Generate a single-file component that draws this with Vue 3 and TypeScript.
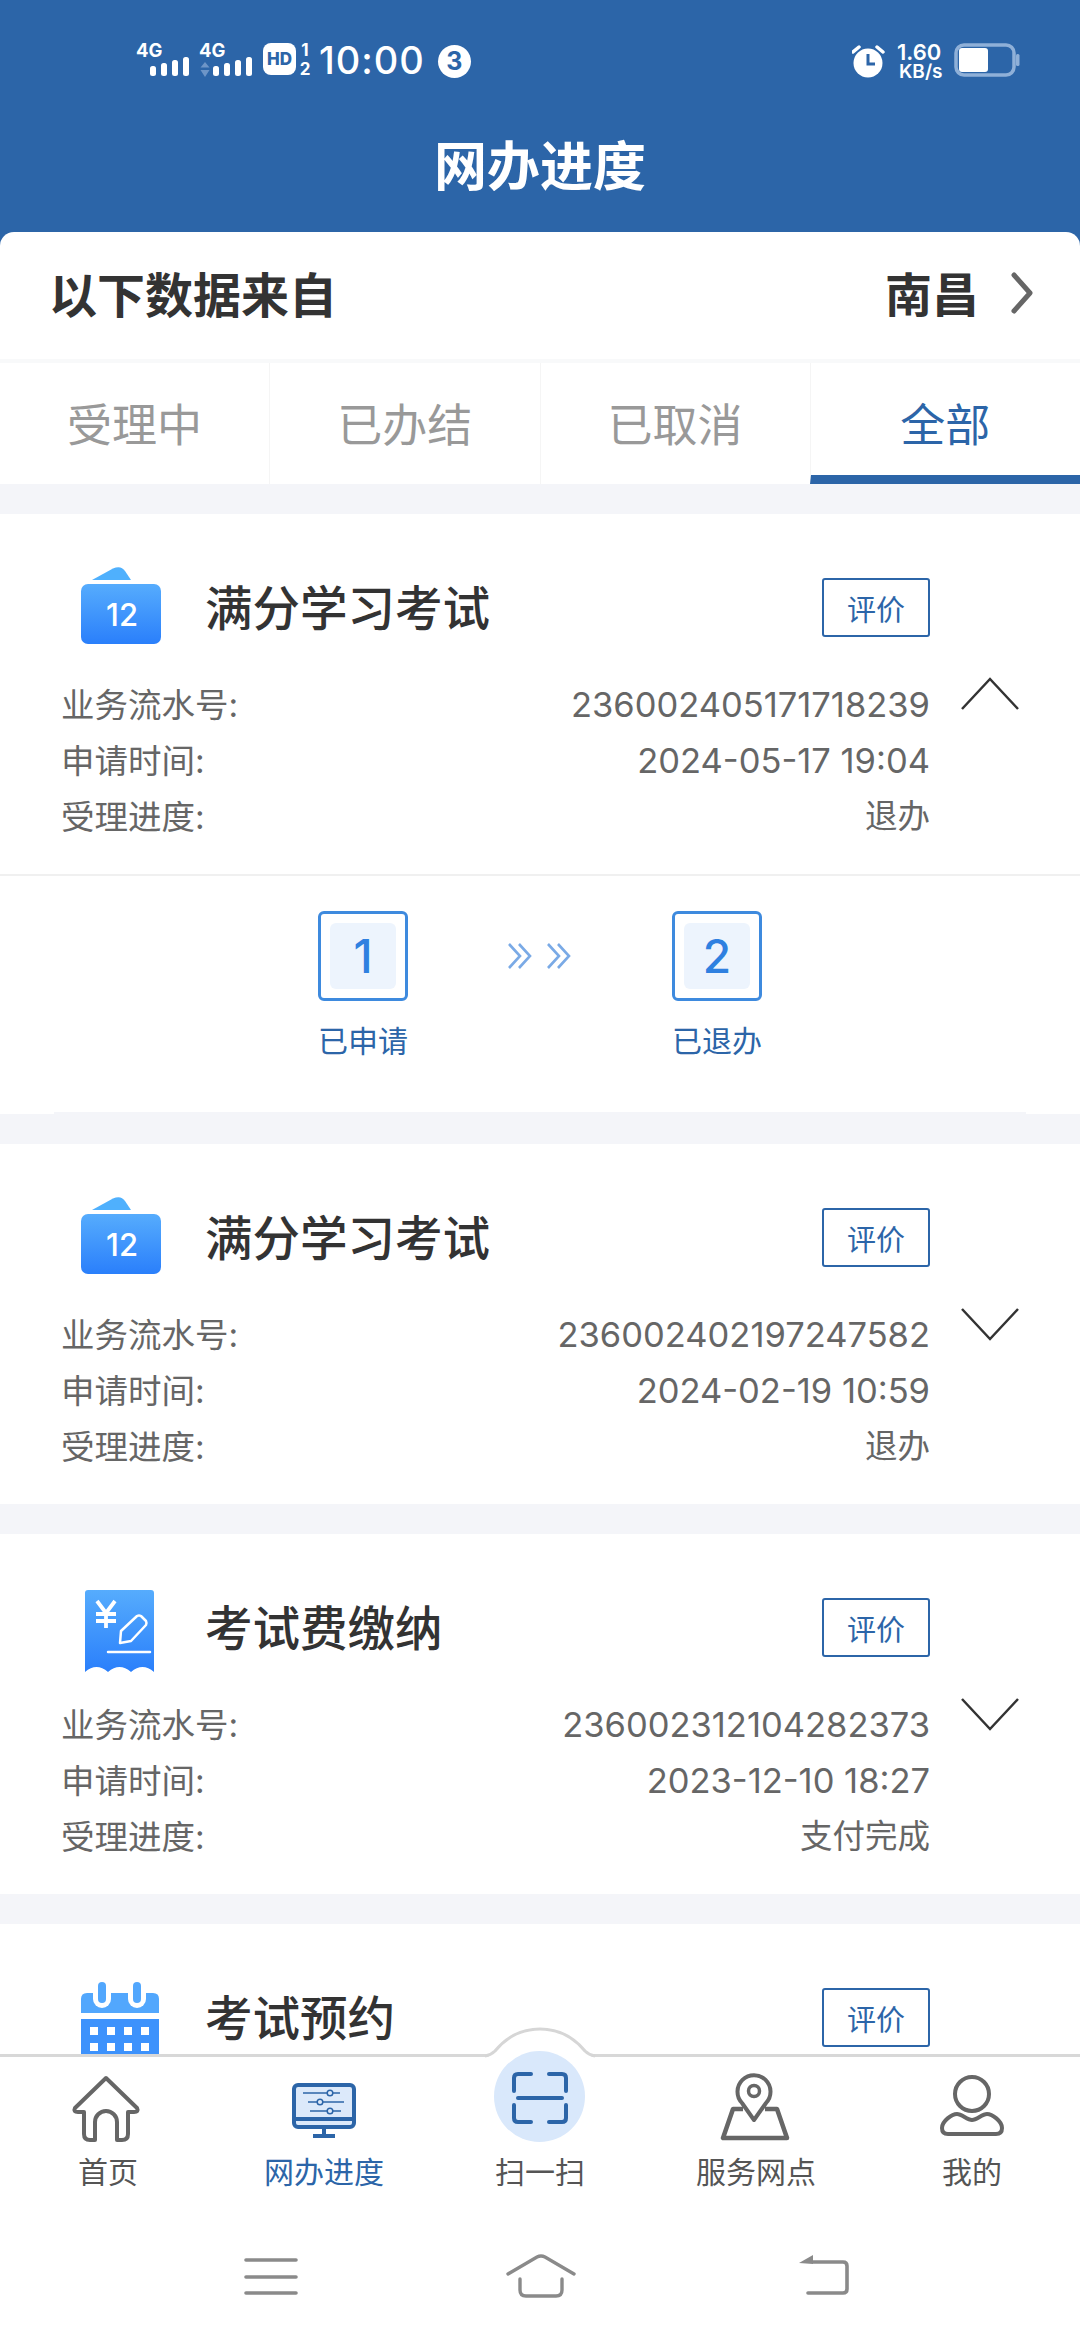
<template>
  <div class="page">
    <div class="top">
      <div class="status">
        <div class="status-left">
          <svg class="signal" width="54" height="40" viewBox="0 -5 54 40">
            <text x="0" y="14" class="sig-text">4G</text>
            <rect x="14" y="23" width="6" height="10" rx="2.5" fill="#fff" />
            <rect x="25" y="20" width="6" height="13" rx="2.5" fill="#fff" />
            <rect x="36" y="17" width="6" height="16" rx="2.5" fill="#fff" />
            <rect x="47" y="14" width="6" height="19" rx="2.5" fill="#fff" />
          </svg>
          <svg class="signal" width="54" height="41" viewBox="0 -5 54 41">
            <text x="0" y="14" class="sig-text">4G</text>
            <path d="M6 19 L10.5 24.5 H1.5 Z M1.5 27 H10.5 L6 34 Z" fill="#6d95c7" />
            <rect x="14" y="23" width="6" height="10" rx="2.5" fill="#fff" />
            <rect x="25" y="20" width="6" height="13" rx="2.5" fill="#fff" />
            <rect x="36" y="17" width="6" height="16" rx="2.5" fill="#fff" />
            <rect x="47" y="14" width="6" height="19" rx="2.5" fill="#fff" />
          </svg>
          <span class="hd">HD</span>
          <span class="sim"><span>1</span><span>2</span></span>
          <span class="time">10:00</span>
          <span class="badge">3</span>
        </div>
        <div class="status-right">
          <svg width="34" height="36" viewBox="0 0 34 36">
            <circle cx="16" cy="20" r="14.5" fill="#fff" />
            <path d="M16 11 V21 H23" fill="none" stroke="#2c65a8" stroke-width="3" />
            <path d="M1 9 L7 4 M25 4 L31 9" stroke="#fff" stroke-width="3.5" stroke-linecap="round" />
          </svg>
          <div class="speed"><span>1.60</span><span class="unit">KB/s</span></div>
          <svg width="66" height="34" viewBox="0 0 66 34">
            <rect x="2" y="2" width="58" height="30" rx="8" fill="none" stroke="#8fb0d8" stroke-width="3.5" />
            <rect x="5" y="5" width="29" height="24" rx="3" fill="#fff" />
            <rect x="62" y="11" width="3.5" height="12" rx="1.5" fill="#8fb0d8" />
          </svg>
        </div>
      </div>
      <div class="title">网办进度</div>
      <div class="source">
        <span class="source-label">以下数据来自</span>
        <span class="source-city">南昌</span>
        <svg class="source-arrow" width="24" height="42" viewBox="0 0 24 42">
          <path d="M4 3 L20 21 L4 39" fill="none" stroke="#666" stroke-width="5" stroke-linecap="round" stroke-linejoin="round" />
        </svg>
      </div>
    </div>

    <div class="tabs">
      <div v-for="tab in tabs" :key="tab" class="tab" :class="{ active: tab === activeTab }">{{ tab }}</div>
    </div>

    <div class="list">
      <section v-for="item in items" :key="item.no || item.title" class="card">
        <div class="head">
          <svg class="icon" width="80" height="86" viewBox="0 0 80 86">
            <defs>
              <linearGradient :id="'g-' + item.title + item.no" x1="0" y1="0" x2="0" y2="1">
                <stop offset="0" stop-color="#56acfd" />
                <stop offset="1" stop-color="#2a7ffb" />
              </linearGradient>
            </defs>
            <template v-if="item.icon === 'score'">
              <path d="M11 13 L32 1.5 Q40 -2 44 4 L50 13 Z" fill="#4fb0fd" />
              <rect x="0" y="17" width="80" height="60" rx="7" :fill="'url(#g-' + item.title + item.no + ')'" />
              <text x="41" y="59" text-anchor="middle" class="icon-num">12</text>
            </template>
            <template v-else-if="item.icon === 'receipt'">
              <path d="M4 6 Q4 3 7 3 H70 Q73 3 73 6 V85 Q61.5 75 50 85 Q38.5 75 27 85 Q15.5 75 4 85 Z" :fill="'url(#g-' + item.title + item.no + ')'" />
              <path d="M16 14 L25 26 L34 14 M15 27 H35 M15 34 H35 M25 26 V41" fill="none" stroke="#fff" stroke-width="3.8" />
              <path d="M39 56 L40 44 L56 29 Q58 28 60 29 L65 34 Q66 36 65 38 L50 54 Z" fill="none" stroke="#fff" stroke-width="2.5" stroke-linejoin="round" />
              <path d="M27 65 H69" stroke="#fff" stroke-width="2.5" stroke-linecap="round" />
            </template>
            <template v-else>
              <path d="M0 36 V22 Q0 16 6 16 H72 Q78 16 78 22 V36 Z" fill="#52a7fd" />
              <rect x="12" y="5" width="18" height="26" rx="9" fill="#fff" />
              <rect x="47" y="5" width="18" height="26" rx="9" fill="#fff" />
              <rect x="17" y="5" width="8" height="21" rx="4" fill="#52a7fd" />
              <rect x="52" y="5" width="8" height="21" rx="4" fill="#52a7fd" />
              <rect x="0" y="42" width="78" height="40" fill="#3d92fc" />
              <g fill="#fff">
                <rect v-for="x in [9, 26, 43, 60]" :key="'a' + x" :x="x" y="50" width="8" height="8" />
                <rect v-for="x in [9, 26, 43, 60]" :key="'b' + x" :x="x" y="66" width="8" height="8" />
              </g>
            </template>
          </svg>
          <h2 class="name">{{ item.title }}</h2>
          <button class="rate">评价</button>
        </div>

        <div v-if="item.no" class="body">
          <div class="rows">
            <div class="row"><span class="key">业务流水号:</span><span class="val">{{ item.no }}</span></div>
            <div class="row"><span class="key">申请时间:</span><span class="val">{{ item.time }}</span></div>
            <div class="row"><span class="key">受理进度:</span><span class="state">{{ item.state }}</span></div>
          </div>
          <svg class="toggle" width="60" height="34" viewBox="0 0 60 34">
            <path :d="item.open ? 'M2 32 L30 2 L58 32' : 'M2 2 L30 32 L58 2'" fill="none" stroke="#333" stroke-width="2.5" />
          </svg>
        </div>

        <div v-if="item.open" class="steps-wrap">
          <div class="steps">
            <div class="step">
              <div class="step-box"><span>1</span></div>
              <div class="step-label">已申请</div>
            </div>
            <div class="step-arrows">
              <svg width="64" height="26" viewBox="0 0 64 26">
                <path d="M1 1 L12 13 L1 25 M11 1 L22 13 L11 25 M40 1 L51 13 L40 25 M50 1 L61 13 L50 25" fill="none" stroke="#7aaae6" stroke-width="2.6" />
              </svg>
            </div>
            <div class="step">
              <div class="step-box"><span>2</span></div>
              <div class="step-label">已退办</div>
            </div>
          </div>
          <div class="steps-end"></div>
        </div>
      </section>
    </div>

    <div class="bottom">
      <svg class="bump" width="114" height="34" viewBox="0 0 114 34">
        <path d="M2 32 Q8 30 12 25 Q30 3 57 3 Q84 3 102 25 Q106 30 112 32 V34 H2 Z" fill="#fff" />
        <path d="M2 30 Q8 29 12 25 Q30 3 57 3 Q84 3 102 25 Q106 29 112 30" fill="none" stroke="#d6d6d6" stroke-width="3" />
      </svg>
      <nav class="nav">
        <div class="nav-item">
          <svg width="80" height="76" viewBox="0 0 80 76">
            <path d="M38 8 L7 38 Q5 42 10 42 H16 V64 Q16 70 22 70 H27 V52 A11 11 0 0 1 49 52 V70 H54 Q60 70 60 64 V42 H66 Q71 42 69 38 Z" fill="none" stroke="#666" stroke-width="4" stroke-linejoin="round" />
          </svg>
          <span class="nav-label">首页</span>
        </div>
        <div class="nav-item active">
          <svg width="80" height="76" viewBox="0 0 80 76">
            <rect x="10" y="15" width="60" height="42" rx="4" fill="#dce9fa" stroke="#2c65a8" stroke-width="4" />
            <path d="M10 49 H70" stroke="#2c65a8" stroke-width="4" />
            <path d="M40 57 V66 M29 66 H51" fill="none" stroke="#2c65a8" stroke-width="4" />
            <path d="M19 23 H56 M24 32 H60 M26 41 H57" stroke="#2c65a8" stroke-width="1.6" />
            <circle cx="46" cy="23" r="2.8" fill="#dce9fa" stroke="#2c65a8" stroke-width="1.5" />
            <circle cx="36" cy="32" r="2.8" fill="#dce9fa" stroke="#2c65a8" stroke-width="1.5" />
            <circle cx="46" cy="41" r="2.8" fill="#dce9fa" stroke="#2c65a8" stroke-width="1.5" />
          </svg>
          <span class="nav-label">网办进度</span>
        </div>
        <div class="nav-item">
          <div class="scan-bg"></div>
          <svg class="scan" width="80" height="76" viewBox="0 0 80 76">
            <path d="M31 4 H18 Q14 4 14 8 V21 M49 4 H62 Q66 4 66 8 V21 M14 35 V48 Q14 52 18 52 H31 M66 35 V48 Q66 52 62 52 H49" fill="none" stroke="#2c65a8" stroke-width="4" stroke-linecap="round" />
            <path d="M18 28 H62" stroke="#2c65a8" stroke-width="4" stroke-linecap="round" />
          </svg>
          <span class="nav-label">扫一扫</span>
        </div>
        <div class="nav-item">
          <svg width="80" height="76" viewBox="0 0 80 76">
            <path d="M38 50 L26 33 A16.5 16.5 0 1 1 50 33 Z" fill="none" stroke="#666" stroke-width="4" stroke-linejoin="round" />
            <circle cx="38" cy="21" r="5.5" fill="none" stroke="#666" stroke-width="3.5" />
            <path d="M27 39 H17 L7 68 H71 L61 39 H49" fill="none" stroke="#666" stroke-width="4.5" stroke-linejoin="round" />
          </svg>
          <span class="nav-label">服务网点</span>
        </div>
        <div class="nav-item">
          <svg width="80" height="76" viewBox="0 0 80 76">
            <circle cx="40" cy="24" r="17" fill="none" stroke="#666" stroke-width="4" />
            <path d="M40 50 C35 50 30 44 25 44 C20 44 10 51 10 58 C10 62 12 64 16 64 H64 C68 64 70 62 70 58 C70 51 60 44 55 44 C50 44 45 50 40 50 Z" fill="none" stroke="#666" stroke-width="4" stroke-linejoin="round" />
          </svg>
          <span class="nav-label">我的</span>
        </div>
      </nav>
      <div class="sysbar">
        <svg width="80" height="50" viewBox="0 0 80 50">
          <path d="M15 10 H65 M15 27 H65 M15 43 H65" stroke="#8a8a8a" stroke-width="3.6" stroke-linecap="round" />
        </svg>
        <svg width="80" height="50" viewBox="0 0 80 50">
          <path d="M7 24 L36 7 Q40 5 44 7 L73 24" fill="none" stroke="#8a8a8a" stroke-width="3.4" stroke-linecap="round" />
          <path d="M19 29 V40 Q19 46 25 46 H55 Q61 46 61 40 V29" fill="none" stroke="#8a8a8a" stroke-width="3.4" stroke-linecap="round" />
        </svg>
        <svg class="sys-back" width="80" height="50" viewBox="0 0 80 50">
          <path d="M30 12 H60 Q64 12 64 16 V39 Q64 43 60 43 H25" fill="none" stroke="#8a8a8a" stroke-width="3.6" stroke-linecap="round" />
          <path d="M16 13 L30 5 V14 Z" fill="#8a8a8a" />
        </svg>
      </div>
    </div>
  </div>
</template>

<script setup lang="ts">
interface Item {
  title: string
  icon: 'score' | 'receipt' | 'calendar'
  no?: string
  time?: string
  state?: string
  open?: boolean
}

const tabs = ['受理中', '已办结', '已取消', '全部']
const activeTab = '全部'

const items: Item[] = [
  { title: '满分学习考试', icon: 'score', no: '236002405171718239', time: '2024-05-17 19:04', state: '退办', open: true },
  { title: '满分学习考试', icon: 'score', no: '236002402197247582', time: '2024-02-19 10:59', state: '退办' },
  { title: '考试费缴纳', icon: 'receipt', no: '236002312104282373', time: '2023-12-10 18:27', state: '支付完成' },
  { title: '考试预约', icon: 'calendar' }
]
</script>

<style>
html, body {
  margin: 0;
  background: #f4f5f9;
}
</style>

<style scoped>
.page {
  width: 1080px;
  height: 2340px;
  display: flex;
  flex-direction: column;
  overflow: hidden;
  background: #f4f5f9;
  font-family: Inter, "Noto Sans CJK SC", sans-serif;
  color: #333;
}

.top {
  background: #2c65a8;
}

.status {
  display: flex;
  justify-content: space-between;
  align-items: flex-start;
  height: 36px;
  padding: 43px 60px 0 136px;
  color: #fff;
}

.status-left, .status-right {
  display: flex;
  align-items: flex-start;
}

.signal {
  margin-top: -5px;
  margin-right: 9px;
}

.sig-text {
  font-size: 18.5px;
  font-weight: 700;
  fill: #fff;
}

.hd {
  width: 33px;
  height: 32px;
  margin-left: 1px;
  border-radius: 8px;
  background: #fff;
  color: #2c65a8;
  font-size: 17px;
  font-weight: 800;
  line-height: 32px;
  text-align: center;
}

.sim {
  display: flex;
  flex-direction: column;
  justify-content: space-between;
  height: 33px;
  width: 12px;
  margin-left: 3px;
  font-size: 17px;
  font-weight: 700;
  line-height: 14px;
  text-align: center;
}

.time {
  margin-left: 8px;
  font-size: 38px;
  font-weight: 500;
  letter-spacing: 1px;
  line-height: 36px;
  margin-top: -1px;
}

.badge {
  width: 33px;
  height: 33px;
  margin-left: 13px;
  margin-top: 2px;
  border-radius: 50%;
  background: #fff;
  color: #2c65a8;
  font-size: 25px;
  font-weight: 700;
  line-height: 33px;
  text-align: center;
}

.speed {
  display: flex;
  flex-direction: column;
  width: 48px;
  margin: -1px 9px 0 11px;
  font-size: 22px;
  font-weight: 600;
  line-height: 20px;
}

.unit {
  margin-left: 2px;
  font-size: 19px;
  white-space: nowrap;
}

.title {
  margin-top: 58px;
  font-size: 53px;
  font-weight: 700;
  line-height: 60px;
  text-align: center;
  color: #fff;
}

.source {
  display: flex;
  align-items: center;
  height: 127px;
  margin-top: 35px;
  padding: 0 46px 0 49px;
  border-radius: 14px 14px 0 0;
  background: #fff;
}

.source-label {
  flex: 1;
  margin-top: -8px;
  font-size: 48px;
  font-weight: 700;
}

.source-city {
  margin-top: -8px;
  font-size: 47px;
  font-weight: 700;
}

.source-arrow {
  margin-left: 31px;
  margin-top: -6px;
}

.tabs {
  box-sizing: border-box;
  display: flex;
  flex-shrink: 0;
  height: 125px;
  border-top: 4px solid #f8f9fa;
  background: #fff;
}

.tab {
  box-sizing: border-box;
  flex: 1;
  border-left: 1px solid #f5f5f5;
  color: #999;
  font-size: 45px;
  line-height: 125px;
  text-align: center;
}

.tab:first-child {
  border-left: 0;
}

.tab.active {
  border-bottom: 9px solid #2c65a8;
  color: #2c65a8;
}

.list {
  flex: 1;
  min-height: 0;
  overflow: hidden;
  padding-top: 30px;
}

.card {
  margin-bottom: 30px;
  background: #fff;
}

.head {
  display: flex;
  align-items: center;
  height: 78px;
  padding: 56px 150px 0 81px;
}

.icon {
  flex-shrink: 0;
  align-self: flex-start;
  margin-top: -3px;
  overflow: visible;
}

.icon-num {
  fill: #fff;
  font-size: 31px;
  font-weight: 500;
}

.name {
  flex: 1;
  margin: 0 0 0 44px;
  font-size: 47.5px;
  font-weight: 500;
  line-height: 60px;
}

.rate {
  box-sizing: border-box;
  width: 108px;
  height: 59px;
  margin-top: -3px;
  padding: 0;
  border: 2px solid #2c65a8;
  border-radius: 3px;
  background: #fff;
  color: #2c65a8;
  font-family: inherit;
  font-size: 29px;
}

.body {
  display: flex;
  align-items: flex-start;
  margin-top: 29px;
  padding: 0 60px 29px 61px;
}

.rows {
  flex: 1;
  color: #666;
  line-height: 56px;
}

.row {
  display: flex;
  justify-content: space-between;
  height: 56px;
}

.key {
  font-size: 33.5px;
}

.val {
  font-size: 34.5px;
}

.state {
  font-size: 32.5px;
}

.toggle {
  flex-shrink: 0;
  margin-left: 30px;
}

.steps-wrap {
  border-top: 2px solid #f0f0f0;
}

.steps {
  display: flex;
  justify-content: center;
  padding: 35px 0 51px;
}

.step {
  width: 90px;
}

.step-box {
  box-sizing: border-box;
  display: flex;
  width: 90px;
  height: 90px;
  padding: 9px;
  border: 3px solid #3e8ade;
  border-radius: 6px;
}

.step-box span {
  flex: 1;
  border-radius: 6px;
  background: #edf4fd;
  color: #2f80e0;
  font-size: 46px;
  font-weight: 500;
  line-height: 66px;
  text-align: center;
}

.step-label {
  margin-top: 20px;
  color: #2c65a8;
  font-size: 30px;
  line-height: 40px;
  text-align: center;
  white-space: nowrap;
  margin-left: -5px;
  margin-right: -5px;
}

.step-arrows {
  display: flex;
  justify-content: center;
  width: 264px;
  padding-top: 32px;
}

.step-arrows svg {
  display: block;
}

.steps-end {
  height: 2px;
  margin: 0 54px;
  background: #f4f5f9;
}

.bottom {
  position: relative;
  flex-shrink: 0;
  height: 283px;
  border-top: 3px solid #d8d8d8;
  background: #fff;
}

.bump {
  position: absolute;
  top: -31px;
  left: 483px;
}

.nav {
  display: flex;
  height: 138px;
  padding-top: 13px;
}

.nav-item {
  position: relative;
  display: flex;
  flex: 1;
  flex-direction: column;
  align-items: center;
  color: #555;
}

.nav-item.active {
  color: #2c65a8;
}

.nav-label {
  margin-top: 6px;
  font-size: 30px;
  line-height: 40px;
  white-space: nowrap;
}

.scan-bg {
  position: absolute;
  top: -19px;
  left: 62px;
  width: 91px;
  height: 91px;
  border-radius: 50%;
  background: #d9e8fb;
}

.scan {
  position: relative;
}

.sysbar {
  display: flex;
  gap: 190px;
  padding: 42px 0 0 231px;
}

.sys-back {
  margin-left: 12px;
}
</style>
